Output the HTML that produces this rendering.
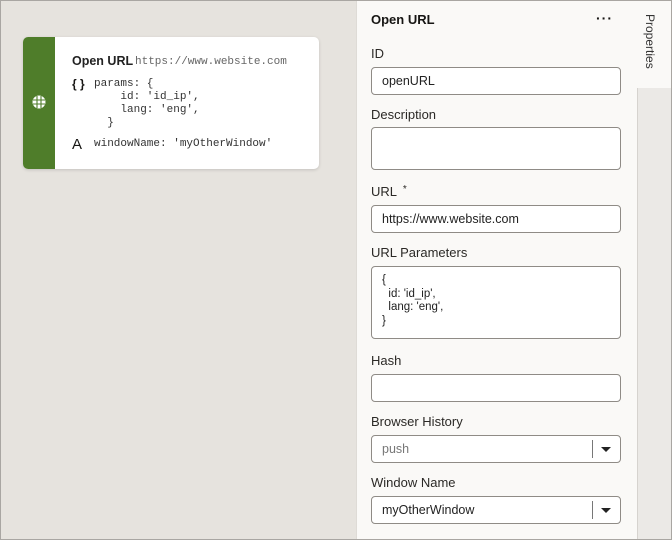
<!DOCTYPE html>
<html><head><style>
*{box-sizing:border-box;margin:0;padding:0}
body{width:672px;height:540px;background:#e6e3de;font-family:"Liberation Sans",sans-serif;position:relative;overflow:hidden;color:#161513}
.frame{position:absolute;inset:0;border:1px solid #a9a6a2;pointer-events:none;z-index:9}
.card{position:absolute;left:23px;top:37px;width:296px;height:132px;background:#fff;border-radius:5px;box-shadow:0 1px 3px rgba(0,0,0,.15);overflow:hidden}
.strip{position:absolute;left:0;top:0;width:32px;height:100%;background:#4f7d2a}
.mono{font-family:"Liberation Mono",monospace;font-size:11px;color:#333}
.t{position:absolute;white-space:pre}
.panel{position:absolute;left:356px;top:0;width:281px;height:540px;background:#faf9f7;border-left:1px solid #dedbd6}
.side{position:absolute;left:637px;top:0;width:35px;height:540px;background:#ebe9e6;border-left:1px solid #d6d3cf}
.tab{position:absolute;left:637px;top:0;width:35px;height:88px;background:#faf9f7}
.lab{position:absolute;left:371px;font-size:13px;color:#2b2926}
.in{position:absolute;left:371px;width:250px;height:28px;background:#fff;border:1px solid #8f8b86;border-radius:4px;font-size:12.5px;padding:0 10px;line-height:26px;color:#222}
.dd{position:absolute;right:27px;top:4px;bottom:4px;border-left:1px solid #777}
.arr{position:absolute;right:9px;top:11px;width:0;height:0;border-left:5px solid transparent;border-right:5px solid transparent;border-top:5px solid #222}
</style></head><body>
<div class="card">
 <div class="strip">
  <svg style="position:absolute;left:9px;top:58px" width="14" height="14" viewBox="0 0 14 14"><circle cx="7" cy="7" r="6.5" fill="#fff"/><g stroke="#4f7d2a" stroke-width="1.1" fill="none"><line x1="1" y1="5" x2="13" y2="5"/><line x1="1" y1="9" x2="13" y2="9"/><line x1="5" y1="1" x2="5" y2="13"/><line x1="9" y1="1" x2="9" y2="13"/></g></svg>
 </div>
 <div class="t" style="left:49px;top:17px;font-size:12.5px;font-weight:bold;color:#222">Open URL</div>
 <div class="t mono" style="left:112px;top:19px;color:#666;font-size:11px">https://www.website.com</div>
 <div class="t" style="left:49px;top:40px;font-size:12px;font-weight:bold">{ }</div>
 <div class="t mono" style="left:71px;top:41px;line-height:13px">params: {
    id: 'id_ip',
    lang: 'eng',
  }</div>
 <div class="t" style="left:49px;top:99px;font-size:15px">A</div>
 <div class="t mono" style="left:71px;top:101px">windowName: 'myOtherWindow'</div>
</div>
<div class="panel"></div>
<div class="side"></div>
<div class="tab"></div>
<div class="t" style="left:657px;top:14px;transform-origin:0 0;transform:rotate(90deg);font-size:12px;color:#333">Properties</div>
<div class="t" style="left:371px;top:12px;font-size:13px;font-weight:bold">Open URL</div>
<div class="t" style="left:596px;top:10px;font-size:14px;font-weight:bold;letter-spacing:1px">···</div>
<div class="lab" style="top:46px">ID</div>
<div class="in" style="top:67px">openURL</div>
<div class="lab" style="top:107px">Description</div>
<div class="in" style="top:127px;height:43px"></div>
<div class="lab" style="top:184px">URL <span style="font-size:10px;vertical-align:top">&nbsp;*</span></div>
<div class="in" style="top:205px">https://www.website.com</div>
<div class="lab" style="top:245px">URL Parameters</div>
<div class="in" style="top:266px;height:73px;line-height:13.5px;padding-top:7px;font-size:11.5px;white-space:pre">{
  id: 'id_ip',
  lang: 'eng',
}</div>
<div class="lab" style="top:353px">Hash</div>
<div class="in" style="top:374px"></div>
<div class="lab" style="top:414px">Browser History</div>
<div class="in" style="top:435px;color:#777">push<div class="dd"></div><div class="arr"></div></div>
<div class="lab" style="top:475px">Window Name</div>
<div class="in" style="top:496px">myOtherWindow<div class="dd"></div><div class="arr"></div></div>
<div class="frame"></div>
</body></html>
